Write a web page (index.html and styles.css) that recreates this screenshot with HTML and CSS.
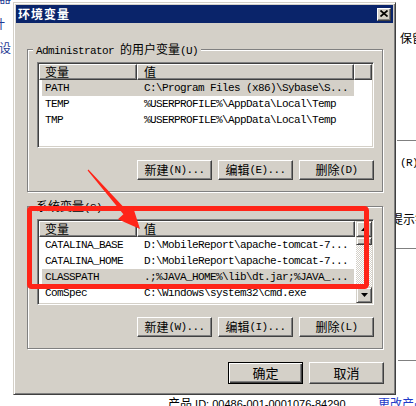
FILE: index.html
```html
<!DOCTYPE html>
<html>
<head>
<meta charset="utf-8">
<link rel="stylesheet" href="styles.css">
</head>
<body>
<div class="screen">
  <div class="bg">
    <span class="bgt link t-qi">器</span>
    <span class="bgt link t-ji">计</span>
    <span class="bgt link t-she">设</span>
    <span class="bgt t-bao">保留</span>
    <span class="bgm t-r">(R)</span>
    <span class="bgt t-tishi">提示符</span>
    <div class="hline l1"></div>
    <div class="hline l2"></div>
    <div class="hline l3"></div>
    <div class="prodid"><span class="c">产品</span> ID: 00486-001-0001076-84290</div>
    <span class="bgt link t-change">更改产品</span>
  </div>

  <div class="dialog">
    <div class="titlebar">
      <span class="title">环境变量</span>
      <div class="close"><svg width="8" height="7" viewBox="0 0 8 7"><path d="M0.5 0.5 L7.5 6.5 M7.5 0.5 L0.5 6.5" stroke="#000" stroke-width="1.7" fill="none"/></svg></div>
    </div>
    <div class="body">
      <div class="group g1">
        <div class="legend">Administrator <span class="c">的用户变量</span>(U)</div>
        <div class="list">
          <div class="hdr">
            <div class="hc hc1"><span class="c">变量</span></div>
            <div class="hc hc2"><span class="c">值</span></div>
            <div class="hc hc3"></div>
          </div>
          <div class="row sel"><div class="k">PATH</div><div class="v">C:\Program Files (x86)\Sybase\S...</div></div>
          <div class="row"><div class="k">TEMP</div><div class="v">%USERPROFILE%\AppData\Local\Temp</div></div>
          <div class="row"><div class="k">TMP</div><div class="v">%USERPROFILE%\AppData\Local\Temp</div></div>
        </div>
        <div class="btns">
          <div class="btn"><span class="c">新建</span>(N)...</div>
          <div class="btn"><span class="c">编辑</span>(E)...</div>
          <div class="btn"><span class="c">删除</span>(D)</div>
        </div>
      </div>

      <div class="group g2">
        <div class="legend"><span class="c">系统变量</span>(S)</div>
        <div class="list list2">
          <div class="lv">
            <div class="hdr">
              <div class="hc hc1"><span class="c">变量</span></div>
              <div class="hc hc2 wide"><span class="c">值</span></div>
            </div>
            <div class="row"><div class="k">CATALINA_BASE</div><div class="v">D:\MobileReport\apache-tomcat-7...</div></div>
            <div class="row"><div class="k">CATALINA_HOME</div><div class="v">D:\MobileReport\apache-tomcat-7...</div></div>
            <div class="row sel"><div class="k">CLASSPATH</div><div class="v">.;%JAVA_HOME%\lib\dt.jar;%JAVA_...</div></div>
            <div class="row"><div class="k">ComSpec</div><div class="v">C:\Windows\system32\cmd.exe</div></div>
          </div>
          <div class="sb">
            <div class="sbtn"><svg width="7" height="4" viewBox="0 0 7 4"><path d="M3.5 0 L7 4 L0 4Z" fill="#000"/></svg></div>
            <div class="thumb"></div>
            <div class="track"></div>
            <div class="sbtn"><svg width="7" height="4" viewBox="0 0 7 4"><path d="M0 0 L7 0 L3.5 4Z" fill="#000"/></svg></div>
          </div>
        </div>
        <div class="btns">
          <div class="btn"><span class="c">新建</span>(W)...</div>
          <div class="btn"><span class="c">编辑</span>(I)...</div>
          <div class="btn"><span class="c">删除</span>(L)</div>
        </div>
      </div>

      <div class="okrow">
        <div class="btn big default"><span class="c">确定</span></div>
        <div class="btn big"><span class="c">取消</span></div>
      </div>
    </div>
  </div>

  <svg class="annot" width="416" height="406" viewBox="0 0 416 406">
    <rect x="29.5" y="208.5" width="337" height="78" rx="2" fill="none" stroke="#ff2418" stroke-width="5"/>
    <polygon points="87.6,170.4 123.4,214.3 117.9,219.3 140,229 132.7,205.9 127.2,210.9 88.4,169.6" fill="#ff2418"/>
  </svg>
</div>
</body>
</html>
```

FILE: styles.css
```css
* { box-sizing: border-box; margin: 0; padding: 0; }
html, body { width: 416px; height: 406px; overflow: hidden; background: #fff; }
body {
  font-family: "Liberation Mono", "Noto Sans CJK SC", monospace;
  font-size: 11px;
  letter-spacing: -0.6px;
  color: #000;
}
.c { font-family: "Noto Sans CJK SC", sans-serif; font-size: 12px; letter-spacing: 0; }

.screen { position: relative; width: 416px; height: 406px; overflow: hidden; }

/* background window (behind the dialog) */
.bgt { position: absolute; font-family: "Noto Sans CJK SC", sans-serif; font-size: 12px; letter-spacing: 0; line-height: 14px; white-space: nowrap; }
.bgm { position: absolute; line-height: 14px; white-space: nowrap; }
.link { color: #1f3a93; }
.t-qi { left: -1px; top: -9px; }
.t-ji { left: -7px; top: 17px; }
.t-she { left: -1px; top: 41px; }
.t-bao { left: 400px; top: 31px; }
.t-r { left: 400px; top: 156px; }
.t-tishi { left: 391px; top: 212px; }
.t-change { left: 378px; top: 396px; color: #1f3ac8; }
.hline { position: absolute; height: 1px; background: #808080; right: 0; }
.l1 { left: 397px; top: 140px; }
.l2 { left: 396px; top: 248px; }
.l3 { left: 398px; top: 360px; }
.prodid { position: absolute; left: 168px; top: 396px; line-height: 14px; white-space: nowrap; font-family: "Liberation Sans", sans-serif; font-size: 11px; letter-spacing: 0; }

/* dialog */
.dialog {
  position: absolute; left: 13px; top: 2px;
  width: 383px; height: 393px;
  background: #d4d0c8;
  border: 1px solid; border-color: #d4d0c8 #404040 #404040 #d4d0c8;
  box-shadow: inset 1px 1px #fff, inset -1px -1px #808080;
  padding: 2px;
  display: flex; flex-direction: column;
}
.titlebar {
  height: 18px; flex: none;
  background: #0a246a;
  display: flex; align-items: center;
  padding-left: 2px;
}
.title {
  font-family: "Noto Sans CJK SC", sans-serif; font-weight: bold;
  font-size: 12px; letter-spacing: 1px; color: #fff; line-height: 14px;
}
.close {
  margin-left: auto; margin-right: 2px;
  width: 14px; height: 13px;
  background: #d4d0c8;
  border: 1px solid; border-color: #fff #404040 #404040 #fff;
  box-shadow: inset -1px -1px #808080;
  display: flex; align-items: center; justify-content: center;
  padding: 0 1px 1px 0;
}
.close svg { display: block; }

.body { flex: 1; padding: 0 10px 0 11px; display: flex; flex-direction: column; }

.group {
  border: 1px solid #808080;
  box-shadow: inset 1px 1px #fff, 1px 1px #fff;
  padding: 0 8px 11px 9px;
  display: flex; flex-direction: column;
}
.g1 { margin-top: 26px; }
.g2 { margin-top: 14px; }
.legend {
  align-self: flex-start;
  margin: -8px 0 0 -4px;
  padding: 0 3px;
  height: 14px; line-height: 14px;
  background: #d4d0c8;
  white-space: nowrap;
}

.list {
  margin-top: 6px;
  height: 86px;
  background: #fff;
  border: 1px solid; border-color: #808080 #fff #fff #808080;
  box-shadow: inset 1px 1px #404040, inset -1px -1px #d4d0c8;
  padding: 1px;
  overflow: hidden;
}
.list2 { display: flex; }
.lv { flex: 1; min-width: 0; overflow: hidden; }

.hdr { display: flex; height: 16px; }
.hc {
  background: #d4d0c8;
  border: 1px solid; border-color: #fff #404040 #404040 #fff;
  box-shadow: inset -1px -1px #808080;
  line-height: 14px; height: 16px;
  white-space: nowrap;
}
.hc1 { width: 98px; padding-left: 5px; }
.hc2 { width: 217px; padding-left: 6px; }
.hc2.wide { width: 218px; }
.hc3 { flex: 1; }

.row {
  display: flex; height: 16px; line-height: 16px;
  margin-left: 3px; width: 312px;
  white-space: nowrap;
}
.row .k { width: 95px; padding-left: 3px; overflow: hidden; }
.row .v { width: 217px; padding-left: 7px; overflow: hidden; }
.sel { background: #d4d0c8; }

.sb { width: 16px; flex: none; display: flex; flex-direction: column; }
.sbtn, .thumb {
  background: #d4d0c8;
  border: 1px solid; border-color: #d4d0c8 #404040 #404040 #d4d0c8;
  box-shadow: inset 1px 1px #fff, inset -1px -1px #808080;
}
.sbtn { height: 16px; flex: none; display: flex; align-items: center; justify-content: center; }
.sbtn svg { display: block; }
.thumb { height: 8px; flex: none; }
.track {
  flex: 1;
  background: repeating-conic-gradient(#fff 0 25%, #d4d0c8 0 50%) 0 0 / 2px 2px;
}

.btns { display: flex; justify-content: flex-end; gap: 6px; margin-top: 12px; }
.btn {
  width: 75px; height: 20px;
  background: #d4d0c8;
  border: 1px solid; border-color: #fff #404040 #404040 #fff;
  box-shadow: inset -1px -1px #808080;
  display: flex; align-items: center; justify-content: center;
  white-space: nowrap;
  line-height: 14px;
}
.okrow { display: flex; justify-content: flex-end; gap: 6px; margin-top: 13px; margin-right: -1px; }
.btn.big { height: 22px; }
.btn.default {
  border: 1px solid #000;
  box-shadow: inset 1px 1px #fff, inset -1px -1px #404040, inset -2px -2px #808080;
}
.btn.big .c { font-size: 13px; }

.annot { position: absolute; left: 0; top: 0; pointer-events: none; }
```
